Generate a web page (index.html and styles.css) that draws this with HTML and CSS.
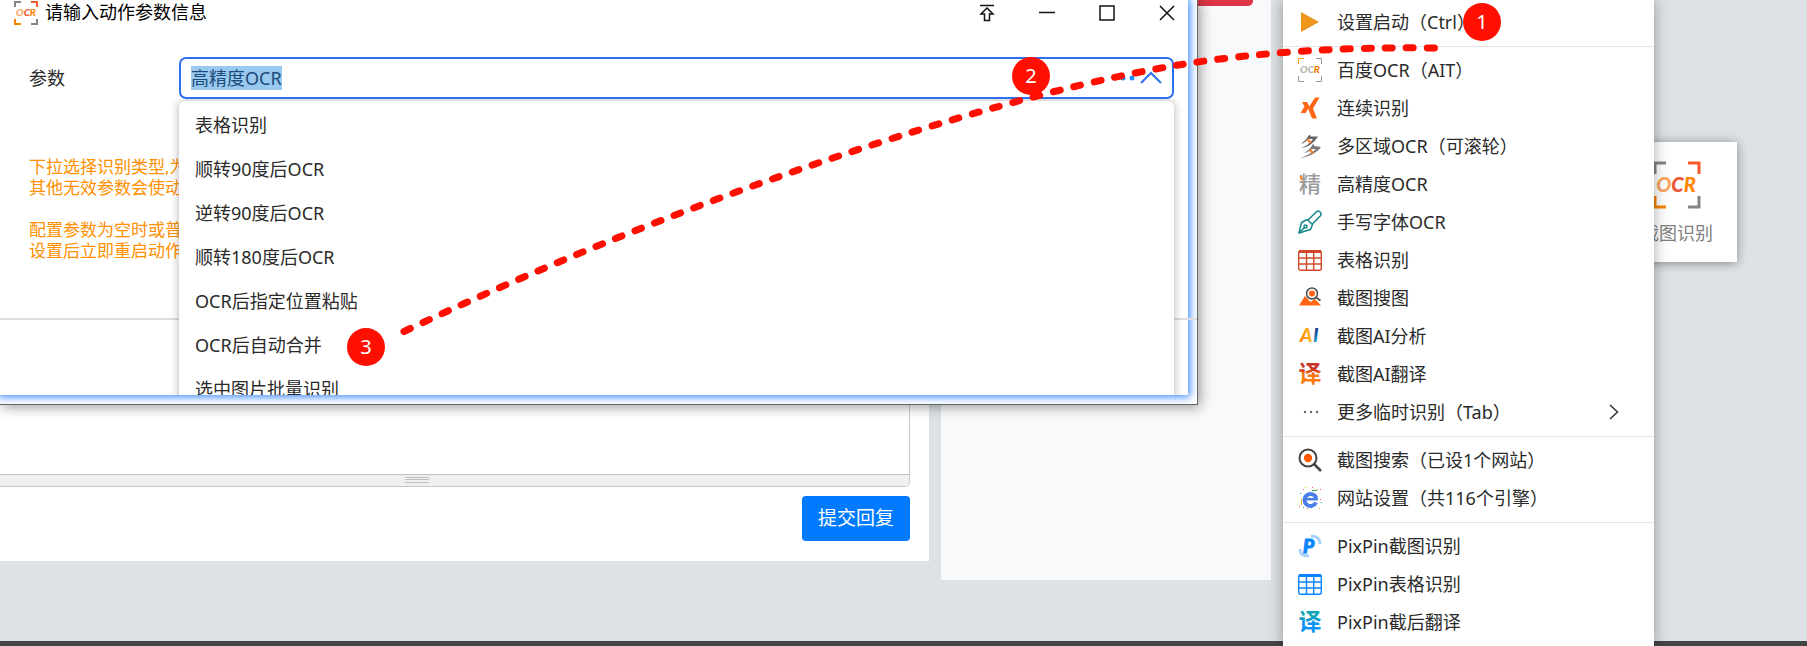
FILE: index.html
```html
<!DOCTYPE html>
<html lang="zh-CN">
<head>
  <meta charset="UTF-8" />
  <meta name="viewport" content="width=device-width, initial-scale=1" />
  <title>动作参数设置</title>
  <link rel="stylesheet" href="styles.css">
</head>
<body>
  <!-- FORUM PAGE -->
  <main class="page">
    <section class="reply">
      <div class="editor">
        <textarea class="editor-text" aria-label="回复内容"></textarea>
        <div class="editor-resizer"><span class="grip"></span></div>
      </div>
      <button class="btn-submit" type="button">提交回复</button>
    </section>
    <aside class="sidebar">
      <div class="sidebar-action"></div>
    </aside>
  </main>
  <footer class="footer"></footer>

  <!-- FLOATING ACTION -->
  <div class="action-card">
    <svg width="48" height="48" viewBox="0 0 48 48" fill="none" stroke-width="3">
      <path d="M2 13V2h11" stroke="#858585"/>
      <path d="M35 2h11v11" stroke="#f15a2b"/>
      <path d="M2 35v11h11" stroke="#f78300"/>
      <path d="M46 35v11H35" stroke="#858585"/>
      <text class="ocr-logo" x="23" y="31" font-size="20" text-anchor="middle"><tspan fill="#faa65e">O</tspan><tspan fill="#ee5533">C</tspan><tspan fill="#ff8400">R</tspan></text>
    </svg>
    <span>截图识别</span>
  </div>

  <!-- DIALOG -->
  <div class="dialog">
    <div class="dialog-glow"></div>
    <header class="titlebar">
      <svg width="24" height="24" viewBox="0 0 24 24" fill="none" stroke-width="2">
        <path d="M1 6V1h6" stroke="#858585"/>
        <path d="M17 1h6v5" stroke="#f15a2b"/>
        <path d="M1 18v5h6" stroke="#f78300"/>
        <path d="M23 18v5h-6" stroke="#858585"/>
        <text class="ocr-logo" x="12" y="15" font-size="10" text-anchor="middle"><tspan fill="#faa65e">O</tspan><tspan fill="#ee5533">C</tspan><tspan fill="#ff8400">R</tspan></text>
      </svg>
      <h1 class="title">请输入动作参数信息</h1>
      <button class="win-btn" type="button" aria-label="置顶">
        <svg width="16" height="18" viewBox="0 0 16 18"><path d="M1 1.500h14M8 4l6 6h-3.500v6.500h-5V10H2z"/></svg>
      </button>
      <button class="win-btn" type="button" aria-label="最小化">
        <svg width="16" height="18" viewBox="0 0 16 18"><path d="M0 8.500h16"/></svg>
      </button>
      <button class="win-btn" type="button" aria-label="最大化">
        <svg width="16" height="18" viewBox="0 0 16 18"><path d="M1 2h14v14H1z"/></svg>
      </button>
      <button class="win-btn" type="button" aria-label="关闭">
        <svg width="16" height="18" viewBox="0 0 16 18"><path d="M1 2l14 14M15 2L1 16"/></svg>
      </button>
    </header>

    <div class="param-row">
      <label for="param">参数</label>
      <div class="combo">
        <input id="param" class="combo-input" type="text" role="combobox" aria-expanded="true" aria-controls="param-list" value="高精度OCR" autofocus>
        <svg class="combo-icons" width="50" height="14" viewBox="0 0 50 14">
          <circle cx="4" cy="7" r="2.500" fill="#1e90ff"/>
          <circle cx="13" cy="7" r="2.500" fill="#1e90ff"/>
          <circle cx="22" cy="7" r="2.500" fill="#1e90ff"/>
          <path d="M31 12l10-10 10 10" fill="none" stroke="#2f6ff2" stroke-width="2"/>
        </svg>
      </div>
    </div>

    <div class="hints">
      <p>下拉选择识别类型,为</p>
      <p>其他无效参数会使动作</p>
      <p class="hint-gap">配置参数为空时或普通</p>
      <p>设置后立即重启动作,</p>
    </div>
    <div class="dialog-footer"></div>

    <div class="dropdown-clip">
      <ul class="dropdown" id="param-list" role="listbox">
        <li role="option">表格识别</li>
        <li role="option">顺转90度后OCR</li>
        <li role="option">逆转90度后OCR</li>
        <li role="option">顺转180度后OCR</li>
        <li role="option">OCR后指定位置粘贴</li>
        <li role="option">OCR后自动合并</li>
        <li role="option">选中图片批量识别</li>
      </ul>
    </div>
  </div>

  <!-- CONTEXT MENU -->
  <nav class="menu">
    <button class="menu-item" type="button">
      <svg class="icon" viewBox="0 0 24 24"><path d="M3 2l18 10L3 22z" fill="#ed951d"/></svg>
      <span>设置启动（Ctrl）</span>
    </button>
    <hr>
    <button class="menu-item" type="button">
      <svg class="icon" viewBox="0 0 24 24" fill="none" stroke="#999">
        <path d="M.5 6V.5H6" stroke="#ff9412"/>
        <path d="M18 .5h5.500V6M.5 18v5.500H6M23.500 18v5.500H18"/>
        <text class="ocr-logo" x="12" y="15" font-size="10" stroke="none" text-anchor="middle"><tspan fill="#b9b4ae">OC</tspan><tspan fill="#ff7a00">R</tspan></text>
      </svg>
      <span>百度OCR（AIT）</span>
    </button>
    <button class="menu-item" type="button">
      <svg class="icon" viewBox="0 0 24 24" fill="#ff6512">
        <path d="M4 6h5l2.500 4.500L7.500 17h-5L6.500 10.500z"/>
        <path d="M17 1.500h4.500L15 12.500l4 10h-5l-4-10z"/>
      </svg>
      <span>连续识别</span>
    </button>
    <button class="menu-item" type="button">
      <svg class="icon" viewBox="0 0 24 24">
        <path d="M11 1c1 0 2 .5 1.500 1.500L20 2.500C16 9 10 13 3 14.500c5-2.500 9-5 12-9.500h-5C8 7.500 6 9 3 10c3-2.500 6-5.500 8-9z" fill="#666"/>
        <path d="M15 10c1 0 1.500 1 1 2l7 1C19 19 10 23 2 24c7-2 12-5 16-9h-4c-2 2-5 3.500-8 4 4-2 7-5 9-9z" fill="#777"/>
        <path d="M9 5l4 4M12 16l3 3" stroke="#ff7a1a" stroke-width="2"/>
      </svg>
      <span>多区域OCR（可滚轮）</span>
    </button>
    <button class="menu-item" type="button">
      <svg class="icon" viewBox="0 0 24 24">
        <text class="glyph" x="12" y="20" font-size="22" text-anchor="middle" fill="#9b9b9b">精</text>
        <path d="M2.500 4l1.500 4" stroke="#ff7a1a" stroke-width="2"/>
      </svg>
      <span>高精度OCR</span>
    </button>
    <button class="menu-item" type="button">
      <svg class="icon" viewBox="0 0 24 24" fill="none" stroke="#12868a" stroke-width="1.500" stroke-linejoin="round">
        <path d="M10 10L18.500 1.700c2-1.800 6 1.200 4 4L14.500 14"/>
        <path d="M9 9.500l5.500 5-2 5L1 23l2.500-10.500z"/>
        <path d="M1 23l6-6"/>
        <circle cx="7.500" cy="16.500" r="1.500"/>
      </svg>
      <span>手写字体OCR</span>
    </button>
    <button class="menu-item" type="button">
      <svg class="icon" viewBox="0 0 24 24" fill="none" stroke="#d2492a" stroke-width="1.400">
        <rect x=".7" y="2.700" width="22.600" height="19.600" rx="2"/>
        <path d="M1 3.500h22" stroke-width="3"/>
        <path d="M1 10h22M1 16h22M8.500 4v18M15.700 4v18"/>
      </svg>
      <span>表格识别</span>
    </button>
    <button class="menu-item" type="button">
      <svg class="icon" viewBox="0 0 24 24">
        <path d="M1 19.500L7 10l5.500 6 4.500-3 6 6.500z" fill="#ff6512"/>
        <circle cx="14" cy="7.500" r="5.500" fill="#fff" stroke="#4a4a4a" stroke-width="1.500"/>
        <circle cx="14" cy="7.500" r="3" fill="#ff6512"/>
        <path d="M18 11.500l4.500 3" stroke="#4a4a4a" stroke-width="1.700"/>
      </svg>
      <span>截图搜图</span>
    </button>
    <button class="menu-item" type="button">
      <svg class="icon" viewBox="0 0 24 24">
        <defs>
          <linearGradient id="ai-a"><stop offset="0" stop-color="#ff7a00"/><stop offset="1" stop-color="#ffc21a"/></linearGradient>
          <linearGradient id="ai-i" x2="0" y2="1"><stop offset=".3" stop-color="#1a3c98"/><stop offset=".8" stop-color="#1e9ac8"/></linearGradient>
        </defs>
        <text class="ocr-logo" x="2" y="18" font-size="19" fill="url(#ai-a)">A</text>
        <text class="ocr-logo" x="15" y="18" font-size="19" fill="url(#ai-i)">I</text>
      </svg>
      <span>截图AI分析</span>
    </button>
    <button class="menu-item" type="button">
      <svg class="icon" viewBox="0 0 24 24">
        <defs>
          <linearGradient id="fy-red" x2="0" y2="1"><stop offset=".4" stop-color="#c8321e"/><stop offset=".6" stop-color="#ff7a10"/></linearGradient>
        </defs>
        <text class="glyph glyph-bold" x="12" y="20" font-size="23" text-anchor="middle" fill="url(#fy-red)">译</text>
      </svg>
      <span>截图AI翻译</span>
    </button>
    <button class="menu-item" type="button">
      <svg class="icon" viewBox="0 0 24 24" fill="#666"><circle cx="7" cy="12" r="1.200"/><circle cx="13" cy="12" r="1.200"/><circle cx="19" cy="12" r="1.200"/></svg>
      <span>更多临时识别（Tab）</span>
      <svg class="submenu-arrow" width="10" height="16" viewBox="0 0 10 16"><path d="M1 1l7.500 7L1 15" fill="none" stroke="#333" stroke-width="1.500"/></svg>
    </button>
    <hr>
    <button class="menu-item" type="button">
      <svg class="icon" viewBox="0 0 24 24" fill="none" stroke="#444">
        <circle cx="10" cy="10" r="8.500" stroke-width="2"/>
        <circle cx="10" cy="10" r="4.200" fill="#ff5a00" stroke="none"/>
        <path d="M16 16l7 7" stroke-width="2.500"/>
      </svg>
      <span>截图搜索（已设1个网站）</span>
    </button>
    <button class="menu-item" type="button">
      <svg class="icon" viewBox="0 0 24 24">
        <path d="M5 3h1v1H5zM14 1h1v1h-1zM22 3h1v1h-1zM1 20h1v1H1zM22 13h1v1h-1zM9 22h1v1H9z" fill="#f0643c"/>
        <path d="M7 1h1v1H7zM3 13h1v6H3zM21 22h1v1h-1zM19 3h1v1h-1z" fill="#f5b324"/>
        <path d="M2 7h1v1H2zM14 4h5v1h-5zM5 21h1v1H5zM23 16h1v1h-1z" fill="#35a566"/>
        <path d="M18 16.500A6 6 0 1 1 18 11.500" fill="none" stroke="#4a7fe8" stroke-width="4"/>
        <path d="M8 13.200h11.800" stroke="#4a7fe8" stroke-width="2.500"/>
        <path d="M17 9.500q1.500 1.500 1.500 4.500" fill="none" stroke="#4a7fe8" stroke-width="3"/>
      </svg>
      <span>网站设置（共116个引擎）</span>
    </button>
    <hr>
    <button class="menu-item" type="button">
      <svg class="icon" viewBox="0 0 24 24">
        <path d="M13 2.500c5-1 9 2 9 7.500M11 21.500c-5 1-9-1-9-6.500" fill="none" stroke="#a6d2fb" stroke-width="3"/>
        <text class="ocr-logo" x="5" y="19" font-size="19" fill="#0b84fa" stroke="#0b84fa">P</text>
      </svg>
      <span>PixPin截图识别</span>
    </button>
    <button class="menu-item" type="button">
      <svg class="icon" viewBox="0 0 24 24" fill="none" stroke="#0a84ff" stroke-width="1.400">
        <rect x=".7" y="2.700" width="22.600" height="19.600" rx="2"/>
        <path d="M1 3.500h22" stroke-width="3"/>
        <path d="M1 10h22M1 16h22M8.500 4v18M15.700 4v18"/>
      </svg>
      <span>PixPin表格识别</span>
    </button>
    <button class="menu-item" type="button">
      <svg class="icon" viewBox="0 0 24 24">
        <defs>
          <linearGradient id="fy-blue" x2="0" y2="1"><stop offset=".4" stop-color="#12a5b8"/><stop offset=".6" stop-color="#0d93f5"/></linearGradient>
        </defs>
        <text class="glyph glyph-bold" x="12" y="20" font-size="23" text-anchor="middle" fill="url(#fy-blue)">译</text>
      </svg>
      <span>PixPin截后翻译</span>
    </button>
  </nav>

  <!-- STEP MARKS -->
  <span class="step step-1">1</span>
  <span class="step step-2">2</span>
  <span class="step step-3">3</span>
  <svg class="trail" width="1460" height="360" viewBox="0 0 1460 360">
    <path d="M404 331.500Q633 222.700 876 143.700Q1056 85.200 1180 64.700Q1297 46 1436 48"/>
  </svg>

  <script>
    document.getElementById('param').select();
  </script>
</body>
</html>
```
FILE: styles.css
```css
:root {
  --text: #2a2a2a;
  --blue: #2f6ff2;
  --red: #ff0f00;
  --hint: #ff9000;
  --page: #dee2e6;
  --line: #e4e4e4;
}

* {
  box-sizing: border-box;
}

body {
  margin: 0;
  min-height: 100vh;
  display: flex;
  flex-direction: column;
  position: relative;
  overflow: hidden;
  background: var(--page);
  color: var(--text);
  font-family: "Noto Sans", "Noto Sans CJK SC", sans-serif;
  font-size: 18px;
  font-weight: 400;
}

button,
input,
textarea {
  font: inherit;
  color: inherit;
}

/* forum page */
.page {
  flex: 1;
  display: flex;
  align-items: flex-start;
  gap: 12px;
  padding-right: 536px;
}

.reply {
  flex: 1;
  display: flex;
  flex-direction: column;
  align-items: flex-end;
  gap: 9px;
  padding: 0 19px 20px 0;
  background: #fff;
}

.editor {
  align-self: stretch;
  margin-left: -77px;
  border: 1px solid #c8c8c8;
  border-top: none;
  border-radius: 0 0 5px 5px;
  overflow: hidden;
}

.editor-text {
  display: block;
  width: 100%;
  height: 474px;
  border: none;
  outline: none;
  resize: none;
}

.editor-resizer {
  height: 12px;
  padding-top: 2px;
  background: #f0f0f0;
  border-top: 1px solid #bfbfbf;
}

.grip {
  display: block;
  width: 24px;
  height: 6px;
  margin: 0 auto;
  border-top: 1px solid #bfbfbf;
  border-bottom: 1px solid #bfbfbf;
  background: linear-gradient(#f0f0f0 1px, #bfbfbf 1px, #bfbfbf 2px, #f0f0f0 2px);
}

.btn-submit {
  height: 45px;
  padding: 0 16px 4px;
  border: none;
  border-radius: 4px;
  background: #007bff;
  color: #fff;
  font-size: 19px;
  cursor: pointer;
}

.sidebar {
  width: 330px;
  height: 580px;
  padding: 0 18px;
  background: #f8f9fa;
}

.sidebar-action {
  height: 6px;
  background: #dc3545;
  border-radius: 0 0 5px 5px;
}

.footer {
  height: 5px;
  background: #444;
}

/* floating action */
.action-card {
  position: absolute;
  left: 1617px;
  top: 142px;
  width: 120px;
  height: 120px;
  padding-top: 19px;
  display: flex;
  flex-direction: column;
  align-items: center;
  gap: 11px;
  background: #fff;
  color: #808080;
  line-height: 26px;
  box-shadow: 0 1px 10px rgba(0, 0, 0, 0.4);
}

.ocr-logo {
  font-family: Lato, sans-serif;
  font-weight: 900;
  font-style: italic;
}

.glyph {
  font-family: "Noto Sans CJK SC", sans-serif;
  font-weight: 500;
}

.glyph-bold {
  font-weight: 700;
}

/* dialog */
.dialog {
  position: absolute;
  left: 0;
  top: 0;
  width: 1198px;
  height: 405px;
  background: #fff;
  border-right: 1px solid #666;
  border-bottom: 1px solid #666;
  box-shadow: 2px 2px 12px rgba(0, 0, 0, 0.4);
}

.dialog-glow {
  position: absolute;
  inset: 0 9px 9px 0;
  box-shadow: 0 0 8px 2px #3a88ff;
  clip-path: inset(0 -9px -9px 0);
}

.titlebar {
  position: relative;
  display: flex;
  align-items: center;
  height: 26px;
  padding-left: 14px;
}

.title {
  flex: 1;
  margin: 0 0 0 7px;
  padding-bottom: 2px;
  font-size: 18px;
  font-weight: 400;
  line-height: 24px;
  color: #000;
}

.win-btn {
  display: flex;
  align-items: center;
  justify-content: center;
  width: 60px;
  height: 26px;
  padding: 0;
  border: none;
  background: none;
}

.win-btn svg {
  fill: none;
  stroke: #111;
  stroke-width: 1.5;
}

.param-row {
  position: relative;
  display: flex;
  align-items: center;
  margin-top: 31px;
  padding: 0 23px 0 29px;
}

.param-row label {
  width: 150px;
  padding-bottom: 2px;
}

.combo {
  flex: 1;
  display: flex;
  align-items: center;
  height: 42px;
  padding: 0 10px;
  border: 2px solid var(--blue);
  border-radius: 7px;
}

.combo-input {
  flex: 1;
  height: 24px;
  padding: 0 0 2px;
  border: none;
  outline: none;
  background: none;
}

.combo-input::selection {
  background: #99c9ef;
  color: #1b4b7a;
}

.combo-icons {
  margin-right: 2px;
  overflow: visible;
}

.hints {
  position: relative;
  padding: 57px 29px 0;
  color: var(--hint);
  font-size: 17px;
  line-height: 21px;
}

.hints p {
  margin: 0;
}

.hints .hint-gap {
  margin-top: 21px;
}

.dialog-footer {
  position: relative;
  margin-top: 57px;
  border-top: 2px solid #dcdcdc;
}

.dropdown-clip {
  position: absolute;
  left: 159px;
  right: 9px;
  top: 99px;
  bottom: 9px;
  padding: 2px 14px 0 20px;
  overflow: hidden;
}

.dropdown {
  margin: 0;
  padding: 2px 0;
  list-style: none;
  background: #fff;
  border-radius: 6px;
  box-shadow: 0 0 10px rgba(0, 0, 0, 0.3);
}

.dropdown li {
  height: 44px;
  padding-left: 16px;
  line-height: 44px;
}

/* context menu */
.menu {
  position: absolute;
  left: 1283px;
  top: 0;
  width: 371px;
  min-height: 100%;
  padding-top: 3px;
  background: #fff;
  box-shadow: 0 0 14px rgba(0, 0, 0, 0.35);
}

.menu hr {
  height: 1px;
  margin: 5px 0 4px;
  border: none;
  background: var(--line);
}

.menu-item {
  display: flex;
  align-items: center;
  width: 100%;
  height: 38px;
  padding: 0 35px 0 15px;
  border: none;
  background: none;
  text-align: left;
}

.menu-item span {
  padding-bottom: 3px;
}

.icon {
  width: 24px;
  height: 24px;
  margin-right: 15px;
}

.submenu-arrow {
  margin-left: auto;
}

/* step marks */
.step {
  position: absolute;
  width: 38px;
  height: 38px;
  border-radius: 50%;
  background: var(--red);
  color: #fff;
  font-size: 20px;
  line-height: 38px;
  text-align: center;
}

.step-1 {
  left: 1463px;
  top: 3px;
}

.step-2 {
  left: 1012px;
  top: 57px;
}

.step-3 {
  left: 347px;
  top: 328px;
}

.trail {
  position: absolute;
  left: 0;
  top: 0;
  pointer-events: none;
}

.trail path {
  fill: none;
  stroke: var(--red);
  stroke-width: 7;
  stroke-linecap: round;
  stroke-dasharray: 7 14;
}
```
